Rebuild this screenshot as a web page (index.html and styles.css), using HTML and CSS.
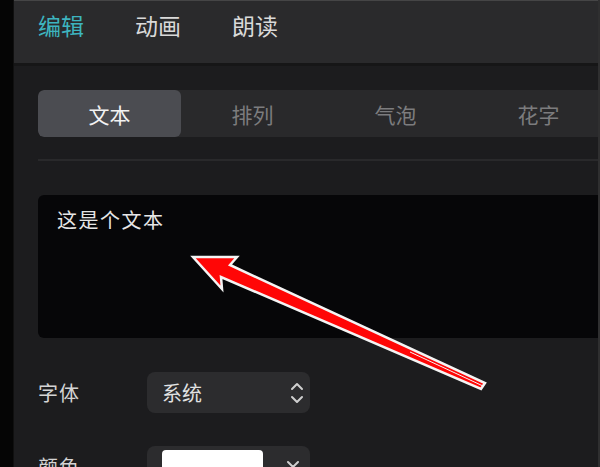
FILE: index.html
```html
<!DOCTYPE html>
<html lang="zh-CN">
<head>
    <meta charset="UTF-8">
    <meta name="viewport" content="width=device-width, initial-scale=1.0">
    <title>文本编辑</title>
    <link rel="stylesheet" href="styles.css">
</head>
<body>
    <div class="sidebar"></div>
    <div class="panel">
        <div class="header">
            <span class="tab active">编辑</span>
            <span class="tab">动画</span>
            <span class="tab">朗读</span>
        </div>
        <div class="content">
            <div class="segments">
                <div class="segment selected">文本</div>
                <div class="segment">排列</div>
                <div class="segment">气泡</div>
                <div class="segment">花字</div>
            </div>
            <div class="divider"></div>
            <div class="text-box">这是个文本</div>

            <div class="row">
                <span class="label">字体</span>
                <div class="select">
                    <span>系统</span>
                    <svg class="updown" width="14" height="28" viewBox="0 0 14 28">
                        <path d="M2 10 L7 5 L12 10" fill="none" stroke="#cfcfcf" stroke-width="2" stroke-linecap="round" stroke-linejoin="round"/>
                        <path d="M2 18 L7 23 L12 18" fill="none" stroke="#cfcfcf" stroke-width="2" stroke-linecap="round" stroke-linejoin="round"/>
                    </svg>
                </div>
            </div>

            <div class="row">
                <span class="label">颜色</span>
                <div class="select color">
                    <div class="swatch"></div>
                    <svg class="down" width="14" height="10" viewBox="0 0 14 10">
                        <path d="M2 2 L7 7 L12 2" fill="none" stroke="#cfcfcf" stroke-width="2" stroke-linecap="round" stroke-linejoin="round"/>
                    </svg>
                </div>
            </div>
        </div>
    </div>

    <!-- red pointer drawn over the text box -->
    <svg class="pointer" width="600" height="467" viewBox="0 0 600 467">
        <polygon points="193,257 237,257 230,265 485,383 481,389 221,277 222,289"
                 fill="#ff0606" stroke="#f4f4f4" stroke-width="2.5" stroke-linejoin="miter"/>
        <line x1="410" y1="352" x2="483" y2="386" stroke="#f4f4f4" stroke-width="1"/>
    </svg>
</body>
</html>
```

FILE: styles.css
```css
body {
    margin: 0;
    width: 600px;
    height: 467px;
    overflow: hidden;
    display: flex;
    background-color: #060606;
    font-family: "Noto Sans CJK SC", "Noto Sans", sans-serif;
    position: relative;
}
.sidebar {
    width: 13px;
    background: #050505;
    border-right: 1px solid #101010;
}
.panel {
    flex: 1;
    background: #1c1c1e;
    border-right: 2px solid #2f2f30;
    overflow: hidden;
}
.header {
    height: 66px;
    background: #2a2a2c;
    border-top: 1px solid #454546;
    border-bottom: 3px solid #161617;
    padding: 8px 0 0 24px;
    box-sizing: border-box;
    display: flex;
    align-items: flex-start;
}
.tab {
    font-size: 23px;
    line-height: 32px;
    color: #d9d9d9;
    margin-right: 51px;
}
.tab.active {
    color: #3db4bf;
}
.content {
    padding-left: 24px;
    padding-top: 24px;
}
.segments {
    display: flex;
    height: 47px;
    background: #29292b;
    border-radius: 6px 0 0 6px;
    overflow: hidden;
}
.segment {
    flex: 0 0 143px;
    display: flex;
    align-items: center;
    justify-content: center;
    font-size: 21px;
    color: #7c7c7e;
    border-radius: 6px;
}
.segment.selected {
    background: #4b4c51;
    color: #f2f2f2;
}
.divider {
    height: 2px;
    background: #29292b;
    margin-top: 22px;
}
.text-box {
    margin-top: 34px;
    height: 143px;
    box-sizing: border-box;
    background: #060608;
    border-radius: 6px 0 0 6px;
    padding: 11px 19px;
    font-size: 20px;
    line-height: 28px;
    letter-spacing: 1.5px;
    color: #e6e6e6;
}
.row {
    display: flex;
    align-items: center;
    margin-top: 34px;
}
.row + .row {
    margin-top: 33px;
}
.label {
    width: 109px;
    font-size: 20px;
    color: #d4d4d4;
    letter-spacing: 1px;
}
.select {
    width: 163px;
    height: 41px;
    box-sizing: border-box;
    background: #2c2c2e;
    border-radius: 8px;
    display: flex;
    align-items: center;
    justify-content: space-between;
    padding: 0 6px 0 15px;
    font-size: 20px;
    color: #e2e2e2;
}
.select.color {
    align-items: flex-start;
    padding-top: 4px;
}
.swatch {
    width: 101px;
    height: 40px;
    background: #ffffff;
    border-radius: 4px;
}
.down {
    margin-top: 10px;
    margin-right: 4px;
}
.pointer {
    position: absolute;
    left: 0;
    top: 0;
    pointer-events: none;
}
```
